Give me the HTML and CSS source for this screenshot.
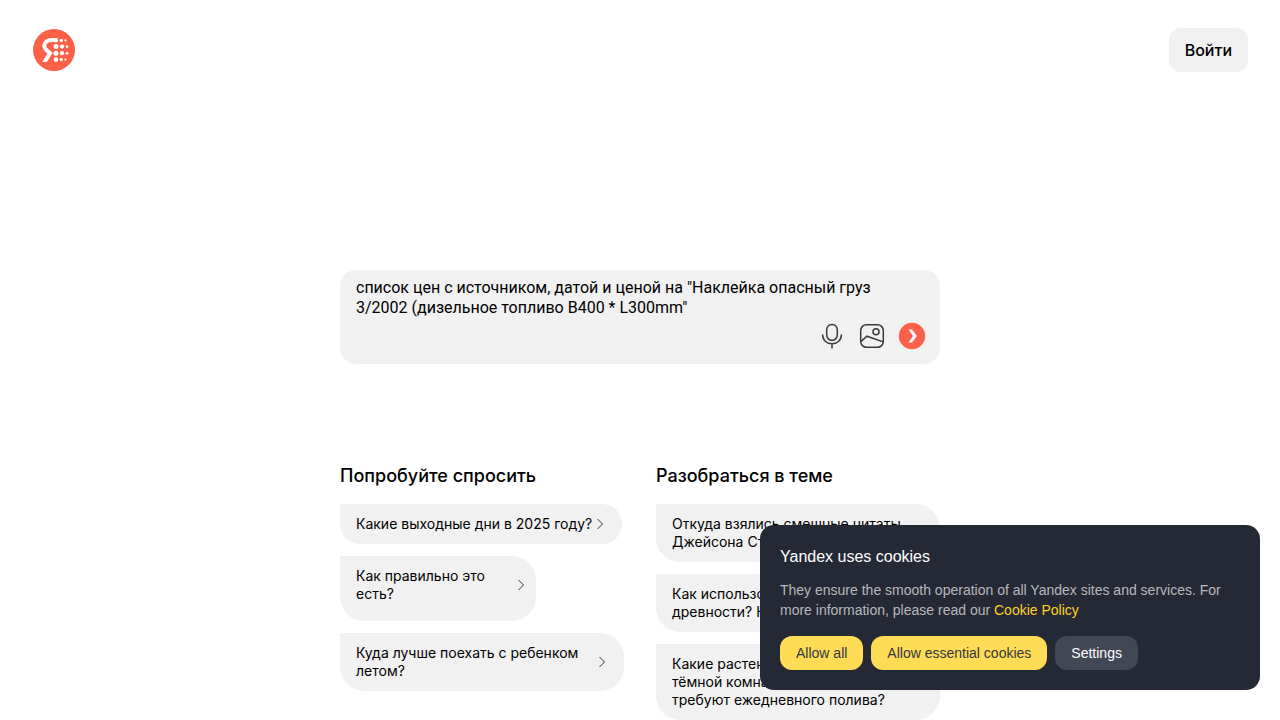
FILE: index.html
```html
<!DOCTYPE html>
<html lang="ru">
<head>
<meta charset="utf-8">
<meta name="viewport" content="width=device-width, initial-scale=1">
<title>Нейро</title>
<link rel="stylesheet" href="styles.css">
</head>
<body>
<header class="header">
  <a class="logo" href="#" aria-label="Нейро">
    <svg viewBox="0 0 44 44" width="44" height="44" aria-hidden="true">
      <circle cx="22" cy="22" r="21" fill="#fc6049"/>
      <path d="M25.500 12H20C15 12 12.300 14.500 12.300 18C12.300 20.800 14.500 22.600 17.600 24.600" fill="none" stroke="#fff" stroke-width="4"/>
      <path d="M15.600 21.300L20.800 24.800L14.800 34H10.200L15.800 25Z" fill="#fff"/>
      <g fill="#fff">
        <circle cx="24" cy="12.400" r="2"/><circle cx="29.200" cy="12.400" r="1.700"/><circle cx="33.400" cy="12.400" r="1.100"/>
        <circle cx="24" cy="18.600" r="2.500"/><circle cx="30" cy="18.600" r="2.100"/><circle cx="35" cy="18.600" r="1.300"/>
        <circle cx="24" cy="25.200" r="2.500"/><circle cx="30" cy="25.200" r="2.100"/><circle cx="35" cy="25.200" r="1.300"/>
        <circle cx="24" cy="31.600" r="2.300"/><circle cx="29.200" cy="31.600" r="1.700"/><circle cx="33.400" cy="31.600" r="1.100"/>
      </g>
    </svg>
  </a>
  <button class="login" type="button">Войти</button>
</header>

<main class="main">
  <form class="search">
    <textarea class="search-input" aria-label="Запрос" rows="2" spellcheck="false">список цен с источником, датой и ценой на "Наклейка опасный груз 3/2002 (дизельное топливо B400 * L300mm"</textarea>
    <div class="actions">
      <button class="action" type="button" aria-label="Голосовой ввод">
        <svg viewBox="0 0 28 28" width="28" height="28" fill="none" stroke="#3a3a3a" stroke-width="1.500" aria-hidden="true">
          <rect x="8.700" y="2.400" width="10.600" height="16" rx="5.300"/>
          <path d="M4.600 12.500C4.600 18.200 8.600 21.800 14 21.800S23.400 18.200 23.400 12.500M14 21.800V26.500"/>
        </svg>
      </button>
      <button class="action" type="button" aria-label="Добавить изображение">
        <svg viewBox="0 0 28 28" width="28" height="28" fill="none" stroke="#3a3a3a" stroke-width="1.500" aria-hidden="true">
          <rect x="2.700" y="2.700" width="22.600" height="22.600" rx="5.800"/>
          <circle cx="18" cy="9.800" r="3"/>
          <path d="M2.900 19.600L8.900 14.200L25.200 19.900"/>
        </svg>
      </button>
      <button class="action" type="submit" aria-label="Отправить">
        <svg viewBox="0 0 28 28" width="28" height="28" aria-hidden="true">
          <circle cx="14" cy="14" r="13.200" fill="#fc6049"/>
          <path d="M10.500 7.400H14L19 14L14 20.600H10.500L15 14Z" fill="#fff"/>
        </svg>
      </button>
    </div>
  </form>

  <div class="topics">
    <section class="topic">
      <h2 class="topic-title">Попробуйте спросить</h2>
      <button class="chip chip-fit" type="button"><span>Какие выходные дни в 2025 году?</span><svg class="arrow" viewBox="0 0 8 12" width="8" height="12" aria-hidden="true"><path d="M1.500 1L6.500 6L1.500 11"/></svg></button>
      <button class="chip chip-small" type="button"><span>Как правильно это есть?</span><svg class="arrow" viewBox="0 0 8 12" width="8" height="12" aria-hidden="true"><path d="M1.500 1L6.500 6L1.500 11"/></svg></button>
      <button class="chip chip-wide" type="button"><span>Куда лучше поехать с ребенком летом?</span><svg class="arrow" viewBox="0 0 8 12" width="8" height="12" aria-hidden="true"><path d="M1.500 1L6.500 6L1.500 11"/></svg></button>
    </section>
    <section class="topic">
      <h2 class="topic-title">Разобраться в теме</h2>
      <button class="chip chip-wide" type="button"><span>Откуда взялись смешные цитаты<br>Джейсона Стейтема?</span></button>
      <button class="chip chip-wide" type="button"><span>Как использовали травы в<br>древности? Назови</span></button>
      <button class="chip chip-wide" type="button"><span>Какие растения выживут в<br>тёмной комнате и не<br>требуют ежедневного полива?</span></button>
    </section>
  </div>
</main>

<aside class="cookies" aria-labelledby="cookies-title">
  <h2 class="cookies-title" id="cookies-title">Yandex uses cookies</h2>
  <p class="cookies-text">They ensure the smooth operation of all Yandex sites and services. For more information, please read our <a class="cookies-link" href="#">Cookie Policy</a></p>
  <div class="cookies-buttons">
    <button class="cookie-button" type="button">Allow all</button>
    <button class="cookie-button" type="button">Allow essential cookies</button>
    <button class="cookie-button cookie-button-dark" type="button">Settings</button>
  </div>
</aside>
</body>
</html>
```

FILE: styles.css
```css
* {
  box-sizing: border-box;
}

body {
  margin: 0;
  background: #fff;
  color: #000;
  font-family: Inter, "Liberation Sans", sans-serif;
}

button {
  border: 0;
  font: inherit;
  color: inherit;
  cursor: pointer;
}

.header {
  display: flex;
  justify-content: space-between;
  align-items: center;
  padding: 28px 32px;
}

.logo,
.logo svg,
.action svg {
  display: block;
}

.login {
  height: 44px;
  padding: 0 16px;
  border-radius: 12px;
  background: #f1f1f1;
  font-size: 16px;
  font-weight: 500;
}

.main {
  max-width: 600px;
  margin: 170px auto 0;
}

.search {
  padding: 8px;
  border-radius: 16px;
  background: #f1f1f1;
}

.search-input {
  display: block;
  width: 100%;
  height: 40px;
  padding: 0 8px;
  border: 0;
  outline: 0;
  resize: none;
  overflow: hidden;
  background: none;
  color: #000;
  font: 400 16px/20px Roboto, Inter, sans-serif;
}

.actions {
  display: flex;
  justify-content: flex-end;
}

.action {
  display: flex;
  align-items: flex-start;
  justify-content: center;
  width: 40px;
  height: 38px;
  padding: 4px 0 0;
  background: none;
}

.topics {
  display: grid;
  grid-template-columns: 1fr 1fr;
  gap: 32px;
  margin-top: 100px;
}

.topic {
  display: flex;
  flex-direction: column;
  align-items: flex-start;
  gap: 12px;
}

.topic-title {
  margin: 0 0 4px;
  font-size: 18px;
  line-height: 24px;
  font-weight: 500;
}

.chip {
  display: flex;
  align-items: center;
  gap: 4px;
  padding: 11px 18px 11px 16px;
  border-radius: 0 24px 24px 24px;
  background: #f1f1f1;
  font-size: 14px;
  line-height: 18px;
  text-align: left;
}

.chip-fit {
  border-radius: 0 20px 20px 20px;
  white-space: nowrap;
}

.chip-small {
  justify-content: space-between;
  width: 196px;
  padding: 11px 11px 18px 16px;
}

.chip-small span {
  max-width: 140px;
}

.chip-wide {
  justify-content: space-between;
  width: 100%;
}

.arrow {
  flex: none;
  fill: none;
  stroke: #333;
  stroke-width: 1;
}

.cookies {
  position: fixed;
  right: 20px;
  bottom: 30px;
  width: 500px;
  max-width: calc(100% - 40px);
  padding: 20px;
  border-radius: 14px;
  background: #252936;
  color: #fff;
  font-family: "Liberation Sans", Arial, sans-serif;
}

.cookies-title {
  margin: 0 0 11px;
  font-size: 16px;
  line-height: 24px;
  font-weight: 400;
}

.cookies-text {
  margin: 0 0 16px;
  color: #b7b8bc;
  font-size: 14px;
  line-height: 20px;
}

.cookies-link {
  color: #ffd21f;
  text-decoration: none;
}

.cookies-buttons {
  display: flex;
  flex-wrap: wrap;
  gap: 8px;
}

.cookie-button {
  height: 34px;
  padding: 0 16px;
  border-radius: 12px;
  background: #ffdc55;
  color: #333740;
  font-size: 14px;
}

.cookie-button-dark {
  background: #424756;
  color: #fff;
}
```
